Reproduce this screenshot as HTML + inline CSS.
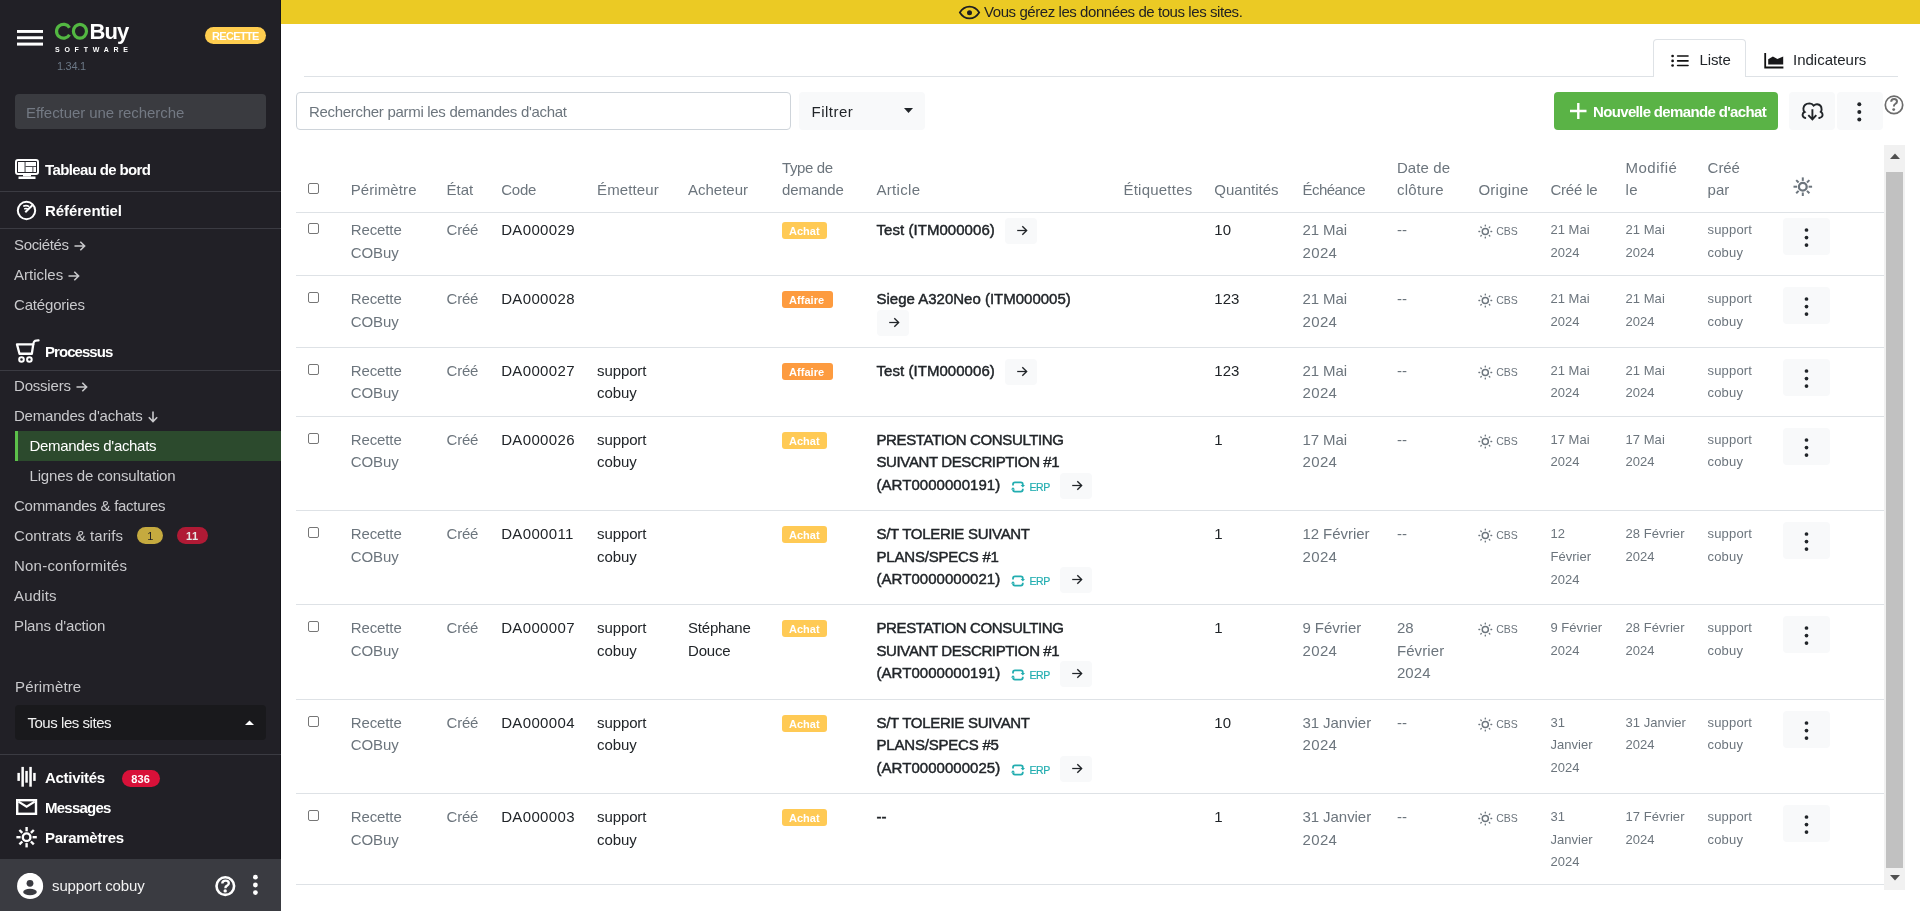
<!DOCTYPE html>
<html><head><meta charset="utf-8"><title>Demandes d'achats</title><style>
html,body{margin:0;padding:0;}
body{width:1920px;height:911px;overflow:hidden;position:relative;background:#fff;font-family:"Liberation Sans",sans-serif;}
#root{position:absolute;left:0;top:0;width:1920px;height:911px;will-change:transform;}
.t{position:absolute;white-space:nowrap;}
.b{position:absolute;}
.abtn{width:32px;height:26px;background:#f8f9fa;border-radius:4px;display:flex;align-items:center;justify-content:center;}
.kbtn{width:47px;height:37px;background:#f8f9fa;border-radius:4px;display:flex;align-items:center;justify-content:center;}
</style></head><body>
<div id="root">
<div class="b" style="left:0px;top:0px;width:281px;height:911px;background:#212026;"></div>
<div class="b" style="left:280px;top:0px;width:1px;height:911px;background:#15151a;"></div>
<svg class="b" style="left:17px;top:30px" width="26" height="16"><rect x="0" y="0" width="26" height="2.9" fill="#fff"/><rect x="0" y="6.3" width="26" height="2.9" fill="#fff"/><rect x="0" y="12.6" width="26" height="3" fill="#fff"/></svg>
<svg class="b" style="left:54px;top:22px" width="36" height="19" viewBox="0 0 36 19"><path d="M15.5 5.75 A6.95 6.95 0 1 0 15.5 12.75" stroke="#53b842" stroke-width="3.2" fill="none"/><ellipse cx="25.95" cy="9.3" rx="6.55" ry="6.85" stroke="#53b842" stroke-width="3.2" fill="none"/></svg>
<div class="t" style="left:89.50px;top:18.58px;font-size:22px;line-height:26px;color:#fff;font-weight:700;letter-spacing:-0.9px;">Buy</div>
<div class="t" style="left:55.00px;top:45.27px;font-size:7px;line-height:9px;color:#fff;font-weight:700;letter-spacing:4.75px;">SOFTWARE</div>
<div class="t" style="left:57.00px;top:59.39px;font-size:11px;line-height:14px;color:#6b7785;letter-spacing:-0.3px;">1.34.1</div>
<div class="b" style="left:205px;top:27px;width:61px;height:17px;background:#ffcd4f;border-radius:9px;"></div>
<div class="t" style="left:212.00px;top:29.39px;font-size:11px;line-height:14px;color:#fff;font-weight:700;letter-spacing:-0.65px;">RECETTE</div>
<div class="b" style="left:15px;top:94px;width:251px;height:35px;background:#3a3b40;border-radius:4px;"></div>
<div class="t" style="left:26.00px;top:101.75px;font-size:15px;line-height:22.5px;color:#737983;letter-spacing:-0.07px;">Effectuer une recherche</div>
<svg class="b" style="left:14px;top:158px" width="26" height="22" viewBox="0 0 26 22"><rect x="2" y="2" width="22" height="14" rx="2" fill="none" stroke="#fff" stroke-width="2"/><rect x="4" y="4" width="18" height="10" fill="#fff"/><rect x="10.6" y="4" width="0.9" height="10" fill="#212026"/><rect x="11.5" y="8.2" width="10.5" height="0.8" fill="#212026"/><rect x="18.5" y="9" width="0.8" height="5" fill="#212026"/><rect x="9" y="16" width="8" height="2.5" fill="#fff"/><rect x="4.5" y="18.5" width="17" height="2.5" fill="#fff"/></svg>
<div class="t" style="left:45.00px;top:158.75px;font-size:15px;line-height:22.5px;color:#fff;font-weight:700;letter-spacing:-0.63px;">Tableau de bord</div>
<div class="b" style="left:0px;top:190.5px;width:281px;height:1px;background:#3b3b42;"></div>
<svg class="b" style="left:15px;top:199px" width="24" height="24" viewBox="0 0 24 24"><circle cx="11.5" cy="11.5" r="8.7" fill="none" stroke="#fff" stroke-width="2"/><path d="M10.3 13.3 L17.6 6" stroke="#fff" stroke-width="2" fill="none"/><path d="M8.2 7.2 Q11.5 5.8 14.2 7.6" stroke="#fff" stroke-width="1.6" fill="none"/><path d="M9.2 10 Q11.2 9 12.8 10.2" stroke="#fff" stroke-width="1.5" fill="none"/></svg>
<div class="t" style="left:45.00px;top:199.75px;font-size:15px;line-height:22.5px;color:#fff;font-weight:700;letter-spacing:-0.05px;">Référentiel</div>
<div class="b" style="left:0px;top:228px;width:281px;height:1px;background:#3b3b42;"></div>
<div class="t" style="left:14.00px;top:233.75px;font-size:15px;line-height:22.5px;color:#c9c9cc;letter-spacing:-0.35px;">Sociétés<svg style="display:inline-block;vertical-align:-1px;margin-left:5px" width="12" height="10" viewBox="0 0 12 10"><path d="M0.5 5 H10.5 M6.3 0.8 L10.6 5 L6.3 9.2" stroke="#c9c9cc" stroke-width="1.6" fill="none"/></svg></div>
<div class="t" style="left:14.00px;top:263.75px;font-size:15px;line-height:22.5px;color:#c9c9cc;letter-spacing:0.0px;">Articles<svg style="display:inline-block;vertical-align:-1px;margin-left:5px" width="12" height="10" viewBox="0 0 12 10"><path d="M0.5 5 H10.5 M6.3 0.8 L10.6 5 L6.3 9.2" stroke="#c9c9cc" stroke-width="1.6" fill="none"/></svg></div>
<div class="t" style="left:14.00px;top:293.75px;font-size:15px;line-height:22.5px;color:#c9c9cc;letter-spacing:-0.18px;">Catégories</div>
<svg class="b" style="left:14px;top:338px" width="26" height="26" viewBox="0 0 26 26"><path d="M3 6.35 H19.25 L17.85 15.75 H5.5 Z" stroke="#fff" stroke-width="2.3" fill="none" stroke-linejoin="round"/><path d="M19.25 6.4 L19.8 4.2 Q20.6 2.3 24.6 2.4" stroke="#fff" stroke-width="2.1" fill="none" stroke-linecap="round"/><circle cx="7.5" cy="21.5" r="2.3" fill="none" stroke="#fff" stroke-width="2"/><circle cx="15.4" cy="21.5" r="2.3" fill="none" stroke="#fff" stroke-width="2"/></svg>
<div class="t" style="left:45.00px;top:340.75px;font-size:15px;line-height:22.5px;color:#fff;font-weight:700;letter-spacing:-0.95px;">Processus</div>
<div class="b" style="left:0px;top:369.5px;width:281px;height:1px;background:#3b3b42;"></div>
<div class="t" style="left:14.00px;top:374.75px;font-size:15px;line-height:22.5px;color:#c9c9cc;letter-spacing:-0.2px;">Dossiers<svg style="display:inline-block;vertical-align:-1px;margin-left:5px" width="12" height="10" viewBox="0 0 12 10"><path d="M0.5 5 H10.5 M6.3 0.8 L10.6 5 L6.3 9.2" stroke="#c9c9cc" stroke-width="1.6" fill="none"/></svg></div>
<div class="t" style="left:14.00px;top:404.75px;font-size:15px;line-height:22.5px;color:#c9c9cc;letter-spacing:-0.21px;">Demandes d'achats<svg style="display:inline-block;vertical-align:-2px;margin-left:5px" width="10" height="12" viewBox="0 0 10 12"><path d="M5 0.5 V10.5 M0.8 6.3 L5 10.6 L9.2 6.3" stroke="#c9c9cc" stroke-width="1.6" fill="none"/></svg></div>
<div class="b" style="left:15px;top:431px;width:266px;height:30px;background:#2c4a2d;"></div>
<div class="b" style="left:15px;top:431px;width:3px;height:30px;background:#5cc04a;"></div>
<div class="t" style="left:29.50px;top:434.75px;font-size:15px;line-height:22.5px;color:#fff;letter-spacing:-0.32px;">Demandes d&#x27;achats</div>
<div class="t" style="left:29.50px;top:464.75px;font-size:15px;line-height:22.5px;color:#c9c9cc;letter-spacing:-0.15px;">Lignes de consultation</div>
<div class="t" style="left:14.00px;top:494.75px;font-size:15px;line-height:22.5px;color:#c9c9cc;letter-spacing:-0.27px;">Commandes &amp; factures</div>
<div class="t" style="left:14.00px;top:524.75px;font-size:15px;line-height:22.5px;color:#c9c9cc;letter-spacing:0.09px;">Contrats &amp; tarifs</div>
<div class="b" style="left:137px;top:527px;width:26px;height:17px;background:#c5aa3f;border-radius:9px;"></div>
<div class="t" style="left:147.20px;top:529.39px;font-size:11px;line-height:14px;color:#222;">1</div>
<div class="b" style="left:177px;top:527px;width:31px;height:17px;background:#b01a35;border-radius:9px;"></div>
<div class="t" style="left:186.00px;top:529.39px;font-size:11px;line-height:14px;color:#e6e6e6;font-weight:700;letter-spacing:0.5px;">11</div>
<div class="t" style="left:14.00px;top:554.75px;font-size:15px;line-height:22.5px;color:#c9c9cc;letter-spacing:0.22px;">Non-conformités</div>
<div class="t" style="left:14.00px;top:584.75px;font-size:15px;line-height:22.5px;color:#c9c9cc;letter-spacing:0.18px;">Audits</div>
<div class="t" style="left:14.00px;top:614.75px;font-size:15px;line-height:22.5px;color:#c9c9cc;letter-spacing:-0.12px;">Plans d&#x27;action</div>
<div class="t" style="left:15.00px;top:675.75px;font-size:15px;line-height:22.5px;color:#c9c9cc;letter-spacing:0.15px;">Périmètre</div>
<div class="b" style="left:15px;top:705px;width:251px;height:35px;background:#19191c;border-radius:4px;"></div>
<div class="t" style="left:27.40px;top:711.75px;font-size:15px;line-height:22.5px;color:#f2f2f2;letter-spacing:-0.45px;">Tous les sites</div>
<svg class="b" style="left:245px;top:720px" width="9" height="5"><path d="M0 5 L4.5 0.5 L9 5 Z" fill="#fff"/></svg>
<div class="b" style="left:0px;top:754px;width:281px;height:1px;background:#3b3b42;"></div>
<svg class="b" style="left:17px;top:766px" width="20" height="22" viewBox="0 0 20 22"><rect x="0.4" y="6.9" width="2.5" height="8" fill="#fff"/><rect x="4.4" y="0.9" width="2.5" height="19.8" fill="#fff"/><rect x="8.3" y="4.9" width="2.5" height="11.8" fill="#fff"/><rect x="12.3" y="0.9" width="2.5" height="19.8" fill="#fff"/><rect x="16.2" y="6.9" width="2.5" height="8" fill="#fff"/></svg>
<div class="t" style="left:45.00px;top:766.75px;font-size:15px;line-height:22.5px;color:#fff;font-weight:700;letter-spacing:-0.3px;">Activités</div>
<div class="b" style="left:122px;top:770px;width:38px;height:17px;background:#d81139;border-radius:9px;"></div>
<div class="t" style="left:131.20px;top:772.39px;font-size:11px;line-height:14px;color:#fff;font-weight:700;letter-spacing:0.2px;">836</div>
<svg class="b" style="left:16px;top:799px" width="22" height="16" viewBox="0 0 22 16"><rect x="1.2" y="1.2" width="18.8" height="13.6" fill="none" stroke="#fff" stroke-width="2.4"/><path d="M2.5 2.6 L10.6 7.6 L18.7 2.6" stroke="#fff" stroke-width="2.2" fill="none"/></svg>
<div class="t" style="left:45.00px;top:796.75px;font-size:15px;line-height:22.5px;color:#fff;font-weight:700;letter-spacing:-0.75px;">Messages</div>
<svg class="b" style="left:16px;top:827px" width="22" height="22" viewBox="0 0 22 22"><circle cx="10.6" cy="10.2" r="3.8" fill="none" stroke="#fff" stroke-width="2.4"/><g stroke="#fff" stroke-width="2.4"><path d="M10.6 0 V4.3"/><path d="M10.6 16.1 V20.4"/><path d="M0.4 10.2 H4.6"/><path d="M16.6 10.2 H20.8"/><path d="M3.4 3 L6.3 5.9"/><path d="M14.9 14.5 L17.8 17.4"/><path d="M3.4 17.4 L6.3 14.5"/><path d="M14.9 5.9 L17.8 3"/></g></svg>
<div class="t" style="left:45.00px;top:826.75px;font-size:15px;line-height:22.5px;color:#fff;font-weight:700;letter-spacing:-0.3px;">Paramètres</div>
<div class="b" style="left:0px;top:859px;width:281px;height:52px;background:#3a3b41;"></div>
<svg class="b" style="left:17px;top:873px" width="27" height="27" viewBox="0 0 27 27"><circle cx="13.1" cy="12.9" r="13.05" fill="#fff"/><circle cx="13" cy="10.3" r="3.4" fill="#3a3b41"/><ellipse cx="13" cy="19" rx="6.8" ry="3.2" fill="#3a3b41"/></svg>
<div class="t" style="left:52.00px;top:874.75px;font-size:15px;line-height:22.5px;color:#f2f2f2;letter-spacing:-0.12px;">support cobuy</div>
<svg class="b" style="left:214px;top:875px" width="23" height="23" viewBox="0 0 23 23"><circle cx="11.3" cy="11.1" r="8.8" fill="none" stroke="#fff" stroke-width="2.6"/><path d="M8.3 8.6 Q8.3 5.6 11.6 5.6 Q14.8 5.6 14.8 8.2 Q14.8 9.9 12.8 10.9 Q11.4 11.6 11.4 13.2" stroke="#fff" stroke-width="2.4" fill="none"/><circle cx="11.2" cy="15.9" r="1.7" fill="#fff"/></svg>
<svg class="b" style="left:252px;top:874px" width="7" height="22" viewBox="0 0 7 22"><circle cx="3.4" cy="3.2" r="2.4" fill="#fff"/><circle cx="3.4" cy="11" r="2.4" fill="#fff"/><circle cx="3.4" cy="18.6" r="2.4" fill="#fff"/></svg>
<div class="b" style="left:281px;top:0px;width:1639px;height:24px;background:#ebca24;"></div>
<svg class="b" style="left:958px;top:5px" width="23" height="15" viewBox="0 0 23 15"><path d="M1.8 7.5 C4.5 3.2 7.8 1.6 11.5 1.6 C15.2 1.6 18.5 3.2 21.2 7.5 C18.5 11.8 15.2 13.4 11.5 13.4 C7.8 13.4 4.5 11.8 1.8 7.5 Z" fill="none" stroke="#1e1e22" stroke-width="1.7"/><circle cx="11.5" cy="7.8" r="2.5" fill="#1e1e22"/></svg>
<div class="t" style="left:984.00px;top:2.00px;font-size:15px;line-height:20px;color:#222;letter-spacing:-0.43px;">Vous gérez les données de tous les sites.</div>
<div class="b" style="left:304px;top:76px;width:1594px;height:1px;background:#dee2e6;"></div>
<div class="b" style="left:1653px;top:39px;width:93px;height:38px;background:#fff;border:1px solid #dee2e6;border-bottom:none;border-radius:4px 4px 0 0;box-sizing:border-box;"></div>
<svg class="b" style="left:1670px;top:53px" width="20" height="15" viewBox="0 0 20 15"><circle cx="2.6" cy="3" r="1.35" fill="#111"/><circle cx="2.6" cy="7.9" r="1.35" fill="#111"/><circle cx="2.6" cy="12.5" r="1.35" fill="#111"/><rect x="6.8" y="2.2" width="12" height="1.6" rx="0.8" fill="#111"/><rect x="6.8" y="7.1" width="12" height="1.6" rx="0.8" fill="#111"/><rect x="6.8" y="11.7" width="12" height="1.6" rx="0.8" fill="#111"/></svg>
<div class="t" style="left:1699.50px;top:48.75px;font-size:15px;line-height:22.5px;color:#212529;letter-spacing:-0.1px;">Liste</div>
<svg class="b" style="left:1763px;top:52px" width="22" height="18" viewBox="0 0 22 18"><path d="M2.2 1 V15.5 H20.4" stroke="#111" stroke-width="1.8" fill="none"/><path d="M5.2 12.6 V7.2 L9.9 4.4 L14.4 7.1 L20.2 4.4 V12.6 Z" fill="#18181a"/></svg>
<div class="t" style="left:1793.00px;top:48.75px;font-size:15px;line-height:22.5px;color:#212529;letter-spacing:0.0px;">Indicateurs</div>
<div class="b" style="left:296px;top:92px;width:495px;height:38px;border:1px solid #ced4da;border-radius:4px;box-sizing:border-box;background:#fff;"></div>
<div class="t" style="left:309.00px;top:100.75px;font-size:15px;line-height:22.5px;color:#6c757d;letter-spacing:-0.3px;">Rechercher parmi les demandes d&#x27;achat</div>
<div class="b" style="left:799px;top:92px;width:126px;height:38px;background:#f8f9fa;border-radius:4px;"></div>
<div class="t" style="left:811.50px;top:100.75px;font-size:15px;line-height:22.5px;color:#212529;letter-spacing:0.48px;">Filtrer</div>
<svg class="b" style="left:904px;top:108px" width="9" height="5"><path d="M0 0 L9 0 L4.5 5 Z" fill="#212529"/></svg>
<div class="b" style="left:1554px;top:92px;width:224px;height:38px;background:#5ab346;border-radius:4px;"></div>
<svg class="b" style="left:1569px;top:102px" width="19" height="18" viewBox="0 0 19 18"><path d="M9.3 1 V17 M1 9 H17.5" stroke="#fff" stroke-width="2.4"/></svg>
<div class="t" style="left:1593.00px;top:100.75px;font-size:15px;line-height:22.5px;color:#fff;font-weight:700;letter-spacing:-0.65px;">Nouvelle demande d&#x27;achat</div>
<div class="b" style="left:1789px;top:92px;width:46px;height:38px;background:#f8f9fa;border-radius:4px;"></div>
<div class="b" style="left:1837px;top:92px;width:46px;height:38px;background:#f8f9fa;border-radius:4px;"></div>
<svg class="b" style="left:1800px;top:100px" width="26" height="22" viewBox="0 0 26 22"><path d="M5.3 18 Q2.4 17.3 2.6 14.6 Q2.8 12.6 4.6 12 Q3.2 10.8 3.4 8.4 Q4 3.6 9.5 3.4 Q12.2 3.4 13.7 5.6 Q15.2 4.2 17.2 4.3 Q21.5 4.8 21.6 9.4 Q21.6 10.8 20.8 11.8 Q22.8 12.8 22.6 15 Q22.3 17.4 19.2 18" stroke="#212529" stroke-width="1.9" fill="none" stroke-linecap="round"/><path d="M12.4 9.3 V19.4 M8.3 15.1 L12.4 19.4 L16.3 15.1" stroke="#212529" stroke-width="1.9" fill="none"/></svg>
<svg class="b" style="left:1856px;top:101px" width="7" height="22" viewBox="0 0 7 22"><circle cx="3.3" cy="3.2" r="2" fill="#212529"/><circle cx="3.3" cy="11" r="2" fill="#212529"/><circle cx="3.3" cy="18.6" r="2" fill="#212529"/></svg>
<svg class="b" style="left:1883px;top:94px" width="22" height="22" viewBox="0 0 22 22"><circle cx="11" cy="10.9" r="8.7" fill="none" stroke="#6c6c6c" stroke-width="1.7"/><path d="M8.2 7.8 Q8.2 5 11.1 5 Q14 5 14 7.5 Q14 9 12.2 10 Q10.9 10.7 10.9 12.5" stroke="#6c6c6c" stroke-width="2" fill="none"/><circle cx="10.7" cy="15.6" r="1.45" fill="#6c6c6c"/></svg>
<div class="b" style="left:308px;top:183px;width:11px;height:11px;border:1px solid #767676;border-radius:2px;box-sizing:border-box;"></div>
<div class="t" style="left:350.70px;top:178.75px;font-size:15px;line-height:22.5px;color:#6c757d;letter-spacing:0.1px;">Périmètre</div>
<div class="t" style="left:446.50px;top:178.75px;font-size:15px;line-height:22.5px;color:#6c757d;letter-spacing:0.03px;">État</div>
<div class="t" style="left:501.20px;top:178.75px;font-size:15px;line-height:22.5px;color:#6c757d;letter-spacing:-0.2px;">Code</div>
<div class="t" style="left:597.00px;top:178.75px;font-size:15px;line-height:22.5px;color:#6c757d;letter-spacing:0.13px;">Émetteur</div>
<div class="t" style="left:688.00px;top:178.75px;font-size:15px;line-height:22.5px;color:#6c757d;letter-spacing:0.0px;">Acheteur</div>
<div class="t" style="left:782.00px;top:156.75px;font-size:15px;line-height:22.5px;color:#6c757d;letter-spacing:-0.4px;">Type de</div>
<div class="t" style="left:782.00px;top:178.75px;font-size:15px;line-height:22.5px;color:#6c757d;letter-spacing:-0.1px;">demande</div>
<div class="t" style="left:876.40px;top:178.75px;font-size:15px;line-height:22.5px;color:#6c757d;letter-spacing:0.33px;">Article</div>
<div class="t" style="left:1123.50px;top:178.75px;font-size:15px;line-height:22.5px;color:#6c757d;letter-spacing:0.22px;">Étiquettes</div>
<div class="t" style="left:1214.30px;top:178.75px;font-size:15px;line-height:22.5px;color:#6c757d;letter-spacing:0.0px;">Quantités</div>
<div class="t" style="left:1302.40px;top:178.75px;font-size:15px;line-height:22.5px;color:#6c757d;letter-spacing:-0.5px;">Échéance</div>
<div class="t" style="left:1396.90px;top:156.75px;font-size:15px;line-height:22.5px;color:#6c757d;letter-spacing:0.1px;">Date de</div>
<div class="t" style="left:1396.90px;top:178.75px;font-size:15px;line-height:22.5px;color:#6c757d;letter-spacing:0.3px;">clôture</div>
<div class="t" style="left:1478.40px;top:178.75px;font-size:15px;line-height:22.5px;color:#6c757d;letter-spacing:0.28px;">Origine</div>
<div class="t" style="left:1550.40px;top:178.75px;font-size:15px;line-height:22.5px;color:#6c757d;letter-spacing:-0.18px;">Créé le</div>
<div class="t" style="left:1625.50px;top:156.75px;font-size:15px;line-height:22.5px;color:#6c757d;letter-spacing:0.5px;">Modifié</div>
<div class="t" style="left:1625.50px;top:178.75px;font-size:15px;line-height:22.5px;color:#6c757d;letter-spacing:0.5px;">le</div>
<div class="t" style="left:1707.60px;top:156.75px;font-size:15px;line-height:22.5px;color:#6c757d;letter-spacing:-0.05px;">Créé</div>
<div class="t" style="left:1707.60px;top:178.75px;font-size:15px;line-height:22.5px;color:#6c757d;letter-spacing:-0.05px;">par</div>
<svg class="b" style="left:1792px;top:176px" width="22" height="22" viewBox="0 0 22 22"><circle cx="10.8" cy="10.7" r="3.9" fill="none" stroke="#6c757d" stroke-width="2.3"/><g stroke="#6c757d" stroke-width="2"><path d="M10.8 1.4 V4.9"/><path d="M10.8 16.5 V20"/><path d="M1.5 10.7 H5"/><path d="M16.6 10.7 H20.1"/><path d="M4.2 4.1 L6.6 6.5"/><path d="M15 14.9 L17.4 17.3"/><path d="M4.2 17.3 L6.6 14.9"/><path d="M15 6.5 L17.4 4.1"/></g></svg>
<div class="b" style="left:296px;top:212px;width:1588px;height:1px;background:#dee2e6;"></div>
<div class="b" style="left:296px;top:275px;width:1588px;height:1px;background:#dee2e6;"></div>
<div class="b" style="left:296px;top:347px;width:1588px;height:1px;background:#dee2e6;"></div>
<div class="b" style="left:296px;top:416px;width:1588px;height:1px;background:#dee2e6;"></div>
<div class="b" style="left:296px;top:510px;width:1588px;height:1px;background:#dee2e6;"></div>
<div class="b" style="left:296px;top:604px;width:1588px;height:1px;background:#dee2e6;"></div>
<div class="b" style="left:296px;top:699px;width:1588px;height:1px;background:#dee2e6;"></div>
<div class="b" style="left:296px;top:793px;width:1588px;height:1px;background:#dee2e6;"></div>
<div class="b" style="left:296px;top:884px;width:1588px;height:1px;background:#dee2e6;"></div>
<div class="b" style="left:308px;top:223px;width:11px;height:11px;border:1px solid #767676;border-radius:2px;box-sizing:border-box;"></div>
<div class="t" style="left:350.70px;top:218.75px;font-size:15px;line-height:22.5px;color:#6c757d;letter-spacing:-0.1px;">Recette</div>
<div class="t" style="left:350.70px;top:241.75px;font-size:15px;line-height:22.5px;color:#6c757d;letter-spacing:-0.1px;">COBuy</div>
<div class="t" style="left:446.50px;top:218.75px;font-size:15px;line-height:22.5px;color:#6c757d;letter-spacing:-0.2px;">Créé</div>
<div class="t" style="left:501.20px;top:218.75px;font-size:15px;line-height:22.5px;color:#212529;letter-spacing:0.35px;">DA000029</div>
<div class="b" style="left:782px;top:222px;width:45px;height:17px;background:#ffca55;border-radius:3px;"></div>
<div class="t" style="left:789.00px;top:224.39px;font-size:11px;line-height:14px;color:#fff;font-weight:700;letter-spacing:0.0px;">Achat</div>
<div class="t" style="left:876.50px;top:218.75px;font-size:15px;line-height:22.5px;color:#212529;letter-spacing:0.05px;-webkit-text-stroke:0.45px #212529;">Test (ITM000006)</div>
<div class="b abtn" style="left:1005px;top:218.0px"><svg width="12" height="11" viewBox="0 0 12 11" style="margin-left:1px;margin-top:-1px"><path d="M1.2 5.5 H10.4" stroke="#212529" stroke-width="1.25" fill="none"/><path d="M6.3 1.2 L10.6 5.5 L6.3 9.8" stroke="#212529" stroke-width="1.4" fill="none"/></svg></div>
<div class="t" style="left:1214.30px;top:218.75px;font-size:15px;line-height:22.5px;color:#212529;">10</div>
<div class="t" style="left:1302.40px;top:218.75px;font-size:15px;line-height:22.5px;color:#6c757d;letter-spacing:-0.05px;">21 Mai</div>
<div class="t" style="left:1302.40px;top:241.75px;font-size:15px;line-height:22.5px;color:#6c757d;letter-spacing:0.4px;">2024</div>
<div class="t" style="left:1396.90px;top:218.75px;font-size:15px;line-height:22.5px;color:#6c757d;letter-spacing:0.1px;">--</div>
<svg class="b" style="left:1478px;top:223.9px" width="15" height="15" viewBox="0 0 15 15"><circle cx="7.3" cy="7.5" r="3.05" fill="none" stroke="#6c757d" stroke-width="1.45"/><g stroke="#6c757d" stroke-width="1.3" stroke-linecap="round"><path d="M7.3 1.1 V1.9"/><path d="M7.3 13.1 V13.9"/><path d="M0.9 7.5 H1.7"/><path d="M12.9 7.5 H13.7"/><path d="M2.8 3 L3.3 3.5"/><path d="M11.3 11.5 L11.8 12"/><path d="M2.8 12 L3.3 11.5"/><path d="M11.3 3.5 L11.8 3"/></g></svg>
<div class="t" style="left:1496.20px;top:223.56px;font-size:10.5px;line-height:14px;color:#6c757d;letter-spacing:0.0px;">CBS</div>
<div class="t" style="left:1550.40px;top:219.45px;font-size:13px;line-height:22.5px;color:#6c757d;letter-spacing:0.05px;">21 Mai</div>
<div class="t" style="left:1550.40px;top:242.45px;font-size:13px;line-height:22.5px;color:#6c757d;letter-spacing:0.05px;">2024</div>
<div class="t" style="left:1625.50px;top:219.45px;font-size:13px;line-height:22.5px;color:#6c757d;letter-spacing:0.05px;">21 Mai</div>
<div class="t" style="left:1625.50px;top:242.45px;font-size:13px;line-height:22.5px;color:#6c757d;letter-spacing:0.05px;">2024</div>
<div class="t" style="left:1707.60px;top:219.45px;font-size:13px;line-height:22.5px;color:#6c757d;letter-spacing:0.15px;">support</div>
<div class="t" style="left:1707.60px;top:242.45px;font-size:13px;line-height:22.5px;color:#6c757d;letter-spacing:0.15px;">cobuy</div>
<div class="b kbtn" style="left:1783px;top:218px"><svg style="margin-top:2px" width="5" height="19" viewBox="0 0 5 19"><circle cx="2.5" cy="2" r="1.85" fill="#212529"/><circle cx="2.5" cy="9.6" r="1.85" fill="#212529"/><circle cx="2.5" cy="17.1" r="1.85" fill="#212529"/></svg></div>
<div class="b" style="left:308px;top:292px;width:11px;height:11px;border:1px solid #767676;border-radius:2px;box-sizing:border-box;"></div>
<div class="t" style="left:350.70px;top:287.75px;font-size:15px;line-height:22.5px;color:#6c757d;letter-spacing:-0.1px;">Recette</div>
<div class="t" style="left:350.70px;top:310.75px;font-size:15px;line-height:22.5px;color:#6c757d;letter-spacing:-0.1px;">COBuy</div>
<div class="t" style="left:446.50px;top:287.75px;font-size:15px;line-height:22.5px;color:#6c757d;letter-spacing:-0.2px;">Créé</div>
<div class="t" style="left:501.20px;top:287.75px;font-size:15px;line-height:22.5px;color:#212529;letter-spacing:0.35px;">DA000028</div>
<div class="b" style="left:782px;top:291px;width:51px;height:17px;background:#fd9b3f;border-radius:3px;"></div>
<div class="t" style="left:789.00px;top:293.39px;font-size:11px;line-height:14px;color:#fff;font-weight:700;letter-spacing:0.05px;">Affaire</div>
<div class="t" style="left:876.50px;top:287.75px;font-size:15px;line-height:22.5px;color:#212529;letter-spacing:0.0px;-webkit-text-stroke:0.45px #212529;">Siege A320Neo (ITM000005)</div>
<div class="b abtn" style="left:877px;top:310.0px"><svg width="12" height="11" viewBox="0 0 12 11" style="margin-left:1px;margin-top:-1px"><path d="M1.2 5.5 H10.4" stroke="#212529" stroke-width="1.25" fill="none"/><path d="M6.3 1.2 L10.6 5.5 L6.3 9.8" stroke="#212529" stroke-width="1.4" fill="none"/></svg></div>
<div class="t" style="left:1214.30px;top:287.75px;font-size:15px;line-height:22.5px;color:#212529;">123</div>
<div class="t" style="left:1302.40px;top:287.75px;font-size:15px;line-height:22.5px;color:#6c757d;letter-spacing:-0.05px;">21 Mai</div>
<div class="t" style="left:1302.40px;top:310.75px;font-size:15px;line-height:22.5px;color:#6c757d;letter-spacing:0.4px;">2024</div>
<div class="t" style="left:1396.90px;top:287.75px;font-size:15px;line-height:22.5px;color:#6c757d;letter-spacing:0.1px;">--</div>
<svg class="b" style="left:1478px;top:292.9px" width="15" height="15" viewBox="0 0 15 15"><circle cx="7.3" cy="7.5" r="3.05" fill="none" stroke="#6c757d" stroke-width="1.45"/><g stroke="#6c757d" stroke-width="1.3" stroke-linecap="round"><path d="M7.3 1.1 V1.9"/><path d="M7.3 13.1 V13.9"/><path d="M0.9 7.5 H1.7"/><path d="M12.9 7.5 H13.7"/><path d="M2.8 3 L3.3 3.5"/><path d="M11.3 11.5 L11.8 12"/><path d="M2.8 12 L3.3 11.5"/><path d="M11.3 3.5 L11.8 3"/></g></svg>
<div class="t" style="left:1496.20px;top:292.56px;font-size:10.5px;line-height:14px;color:#6c757d;letter-spacing:0.0px;">CBS</div>
<div class="t" style="left:1550.40px;top:288.45px;font-size:13px;line-height:22.5px;color:#6c757d;letter-spacing:0.05px;">21 Mai</div>
<div class="t" style="left:1550.40px;top:311.45px;font-size:13px;line-height:22.5px;color:#6c757d;letter-spacing:0.05px;">2024</div>
<div class="t" style="left:1625.50px;top:288.45px;font-size:13px;line-height:22.5px;color:#6c757d;letter-spacing:0.05px;">21 Mai</div>
<div class="t" style="left:1625.50px;top:311.45px;font-size:13px;line-height:22.5px;color:#6c757d;letter-spacing:0.05px;">2024</div>
<div class="t" style="left:1707.60px;top:288.45px;font-size:13px;line-height:22.5px;color:#6c757d;letter-spacing:0.15px;">support</div>
<div class="t" style="left:1707.60px;top:311.45px;font-size:13px;line-height:22.5px;color:#6c757d;letter-spacing:0.15px;">cobuy</div>
<div class="b kbtn" style="left:1783px;top:287px"><svg style="margin-top:2px" width="5" height="19" viewBox="0 0 5 19"><circle cx="2.5" cy="2" r="1.85" fill="#212529"/><circle cx="2.5" cy="9.6" r="1.85" fill="#212529"/><circle cx="2.5" cy="17.1" r="1.85" fill="#212529"/></svg></div>
<div class="b" style="left:308px;top:364px;width:11px;height:11px;border:1px solid #767676;border-radius:2px;box-sizing:border-box;"></div>
<div class="t" style="left:350.70px;top:359.75px;font-size:15px;line-height:22.5px;color:#6c757d;letter-spacing:-0.1px;">Recette</div>
<div class="t" style="left:350.70px;top:381.75px;font-size:15px;line-height:22.5px;color:#6c757d;letter-spacing:-0.1px;">COBuy</div>
<div class="t" style="left:446.50px;top:359.75px;font-size:15px;line-height:22.5px;color:#6c757d;letter-spacing:-0.2px;">Créé</div>
<div class="t" style="left:501.20px;top:359.75px;font-size:15px;line-height:22.5px;color:#212529;letter-spacing:0.35px;">DA000027</div>
<div class="t" style="left:597.00px;top:359.75px;font-size:15px;line-height:22.5px;color:#212529;letter-spacing:-0.1px;">support</div>
<div class="t" style="left:597.00px;top:381.75px;font-size:15px;line-height:22.5px;color:#212529;letter-spacing:-0.1px;">cobuy</div>
<div class="b" style="left:782px;top:363px;width:51px;height:17px;background:#fd9b3f;border-radius:3px;"></div>
<div class="t" style="left:789.00px;top:365.39px;font-size:11px;line-height:14px;color:#fff;font-weight:700;letter-spacing:0.05px;">Affaire</div>
<div class="t" style="left:876.50px;top:359.75px;font-size:15px;line-height:22.5px;color:#212529;letter-spacing:0.05px;-webkit-text-stroke:0.45px #212529;">Test (ITM000006)</div>
<div class="b abtn" style="left:1005px;top:359.0px"><svg width="12" height="11" viewBox="0 0 12 11" style="margin-left:1px;margin-top:-1px"><path d="M1.2 5.5 H10.4" stroke="#212529" stroke-width="1.25" fill="none"/><path d="M6.3 1.2 L10.6 5.5 L6.3 9.8" stroke="#212529" stroke-width="1.4" fill="none"/></svg></div>
<div class="t" style="left:1214.30px;top:359.75px;font-size:15px;line-height:22.5px;color:#212529;">123</div>
<div class="t" style="left:1302.40px;top:359.75px;font-size:15px;line-height:22.5px;color:#6c757d;letter-spacing:-0.05px;">21 Mai</div>
<div class="t" style="left:1302.40px;top:381.75px;font-size:15px;line-height:22.5px;color:#6c757d;letter-spacing:0.4px;">2024</div>
<div class="t" style="left:1396.90px;top:359.75px;font-size:15px;line-height:22.5px;color:#6c757d;letter-spacing:0.1px;">--</div>
<svg class="b" style="left:1478px;top:364.9px" width="15" height="15" viewBox="0 0 15 15"><circle cx="7.3" cy="7.5" r="3.05" fill="none" stroke="#6c757d" stroke-width="1.45"/><g stroke="#6c757d" stroke-width="1.3" stroke-linecap="round"><path d="M7.3 1.1 V1.9"/><path d="M7.3 13.1 V13.9"/><path d="M0.9 7.5 H1.7"/><path d="M12.9 7.5 H13.7"/><path d="M2.8 3 L3.3 3.5"/><path d="M11.3 11.5 L11.8 12"/><path d="M2.8 12 L3.3 11.5"/><path d="M11.3 3.5 L11.8 3"/></g></svg>
<div class="t" style="left:1496.20px;top:364.56px;font-size:10.5px;line-height:14px;color:#6c757d;letter-spacing:0.0px;">CBS</div>
<div class="t" style="left:1550.40px;top:360.45px;font-size:13px;line-height:22.5px;color:#6c757d;letter-spacing:0.05px;">21 Mai</div>
<div class="t" style="left:1550.40px;top:382.45px;font-size:13px;line-height:22.5px;color:#6c757d;letter-spacing:0.05px;">2024</div>
<div class="t" style="left:1625.50px;top:360.45px;font-size:13px;line-height:22.5px;color:#6c757d;letter-spacing:0.05px;">21 Mai</div>
<div class="t" style="left:1625.50px;top:382.45px;font-size:13px;line-height:22.5px;color:#6c757d;letter-spacing:0.05px;">2024</div>
<div class="t" style="left:1707.60px;top:360.45px;font-size:13px;line-height:22.5px;color:#6c757d;letter-spacing:0.15px;">support</div>
<div class="t" style="left:1707.60px;top:382.45px;font-size:13px;line-height:22.5px;color:#6c757d;letter-spacing:0.15px;">cobuy</div>
<div class="b kbtn" style="left:1783px;top:359px"><svg style="margin-top:2px" width="5" height="19" viewBox="0 0 5 19"><circle cx="2.5" cy="2" r="1.85" fill="#212529"/><circle cx="2.5" cy="9.6" r="1.85" fill="#212529"/><circle cx="2.5" cy="17.1" r="1.85" fill="#212529"/></svg></div>
<div class="b" style="left:308px;top:433px;width:11px;height:11px;border:1px solid #767676;border-radius:2px;box-sizing:border-box;"></div>
<div class="t" style="left:350.70px;top:428.75px;font-size:15px;line-height:22.5px;color:#6c757d;letter-spacing:-0.1px;">Recette</div>
<div class="t" style="left:350.70px;top:450.75px;font-size:15px;line-height:22.5px;color:#6c757d;letter-spacing:-0.1px;">COBuy</div>
<div class="t" style="left:446.50px;top:428.75px;font-size:15px;line-height:22.5px;color:#6c757d;letter-spacing:-0.2px;">Créé</div>
<div class="t" style="left:501.20px;top:428.75px;font-size:15px;line-height:22.5px;color:#212529;letter-spacing:0.35px;">DA000026</div>
<div class="t" style="left:597.00px;top:428.75px;font-size:15px;line-height:22.5px;color:#212529;letter-spacing:-0.1px;">support</div>
<div class="t" style="left:597.00px;top:450.75px;font-size:15px;line-height:22.5px;color:#212529;letter-spacing:-0.1px;">cobuy</div>
<div class="b" style="left:782px;top:432px;width:45px;height:17px;background:#ffca55;border-radius:3px;"></div>
<div class="t" style="left:789.00px;top:434.39px;font-size:11px;line-height:14px;color:#fff;font-weight:700;letter-spacing:0.0px;">Achat</div>
<div class="t" style="left:876.50px;top:428.75px;font-size:15px;line-height:22.5px;color:#212529;letter-spacing:-0.38px;-webkit-text-stroke:0.45px #212529;">PRESTATION CONSULTING</div>
<div class="t" style="left:876.50px;top:450.75px;font-size:15px;line-height:22.5px;color:#212529;letter-spacing:-0.38px;-webkit-text-stroke:0.45px #212529;">SUIVANT DESCRIPTION #1</div>
<div class="t" style="left:876.50px;top:473.75px;font-size:15px;line-height:22.5px;color:#212529;letter-spacing:0.04px;-webkit-text-stroke:0.45px #212529;">(ART0000000191)</div>
<svg class="b" style="left:1010px;top:481.0px" width="16" height="12" viewBox="0 0 16 12"><path d="M3 4.6 V3.4 Q3 1.4 5 1.4 H10.8 Q12.8 1.4 12.8 3.4 V4.2" stroke="#22adb0" stroke-width="1.75" fill="none"/><path d="M10.6 4 L15 4 L12.8 6.4 Z" fill="#22adb0"/><path d="M12.8 7.7 V8.6 Q12.8 10.6 10.8 10.6 H5 Q3 10.6 3 8.6 V8.4" stroke="#22adb0" stroke-width="1.75" fill="none"/><path d="M0.8 8.6 L5.2 8.6 L3 6.2 Z" fill="#22adb0"/></svg>
<div class="t" style="left:1029.50px;top:479.56px;font-size:10.5px;line-height:14px;color:#22adb0;letter-spacing:-0.45px;-webkit-text-stroke:0.2px #22adb0;">ERP</div>
<div class="b abtn" style="left:1060px;top:473.0px"><svg width="12" height="11" viewBox="0 0 12 11" style="margin-left:1px;margin-top:-1px"><path d="M1.2 5.5 H10.4" stroke="#212529" stroke-width="1.25" fill="none"/><path d="M6.3 1.2 L10.6 5.5 L6.3 9.8" stroke="#212529" stroke-width="1.4" fill="none"/></svg></div>
<div class="t" style="left:1214.30px;top:428.75px;font-size:15px;line-height:22.5px;color:#212529;">1</div>
<div class="t" style="left:1302.40px;top:428.75px;font-size:15px;line-height:22.5px;color:#6c757d;letter-spacing:-0.05px;">17 Mai</div>
<div class="t" style="left:1302.40px;top:450.75px;font-size:15px;line-height:22.5px;color:#6c757d;letter-spacing:0.4px;">2024</div>
<div class="t" style="left:1396.90px;top:428.75px;font-size:15px;line-height:22.5px;color:#6c757d;letter-spacing:0.1px;">--</div>
<svg class="b" style="left:1478px;top:433.9px" width="15" height="15" viewBox="0 0 15 15"><circle cx="7.3" cy="7.5" r="3.05" fill="none" stroke="#6c757d" stroke-width="1.45"/><g stroke="#6c757d" stroke-width="1.3" stroke-linecap="round"><path d="M7.3 1.1 V1.9"/><path d="M7.3 13.1 V13.9"/><path d="M0.9 7.5 H1.7"/><path d="M12.9 7.5 H13.7"/><path d="M2.8 3 L3.3 3.5"/><path d="M11.3 11.5 L11.8 12"/><path d="M2.8 12 L3.3 11.5"/><path d="M11.3 3.5 L11.8 3"/></g></svg>
<div class="t" style="left:1496.20px;top:433.56px;font-size:10.5px;line-height:14px;color:#6c757d;letter-spacing:0.0px;">CBS</div>
<div class="t" style="left:1550.40px;top:429.45px;font-size:13px;line-height:22.5px;color:#6c757d;letter-spacing:0.05px;">17 Mai</div>
<div class="t" style="left:1550.40px;top:451.45px;font-size:13px;line-height:22.5px;color:#6c757d;letter-spacing:0.05px;">2024</div>
<div class="t" style="left:1625.50px;top:429.45px;font-size:13px;line-height:22.5px;color:#6c757d;letter-spacing:0.05px;">17 Mai</div>
<div class="t" style="left:1625.50px;top:451.45px;font-size:13px;line-height:22.5px;color:#6c757d;letter-spacing:0.05px;">2024</div>
<div class="t" style="left:1707.60px;top:429.45px;font-size:13px;line-height:22.5px;color:#6c757d;letter-spacing:0.15px;">support</div>
<div class="t" style="left:1707.60px;top:451.45px;font-size:13px;line-height:22.5px;color:#6c757d;letter-spacing:0.15px;">cobuy</div>
<div class="b kbtn" style="left:1783px;top:428px"><svg style="margin-top:2px" width="5" height="19" viewBox="0 0 5 19"><circle cx="2.5" cy="2" r="1.85" fill="#212529"/><circle cx="2.5" cy="9.6" r="1.85" fill="#212529"/><circle cx="2.5" cy="17.1" r="1.85" fill="#212529"/></svg></div>
<div class="b" style="left:308px;top:527px;width:11px;height:11px;border:1px solid #767676;border-radius:2px;box-sizing:border-box;"></div>
<div class="t" style="left:350.70px;top:522.75px;font-size:15px;line-height:22.5px;color:#6c757d;letter-spacing:-0.1px;">Recette</div>
<div class="t" style="left:350.70px;top:545.75px;font-size:15px;line-height:22.5px;color:#6c757d;letter-spacing:-0.1px;">COBuy</div>
<div class="t" style="left:446.50px;top:522.75px;font-size:15px;line-height:22.5px;color:#6c757d;letter-spacing:-0.2px;">Créé</div>
<div class="t" style="left:501.20px;top:522.75px;font-size:15px;line-height:22.5px;color:#212529;letter-spacing:0.35px;">DA000011</div>
<div class="t" style="left:597.00px;top:522.75px;font-size:15px;line-height:22.5px;color:#212529;letter-spacing:-0.1px;">support</div>
<div class="t" style="left:597.00px;top:545.75px;font-size:15px;line-height:22.5px;color:#212529;letter-spacing:-0.1px;">cobuy</div>
<div class="b" style="left:782px;top:526px;width:45px;height:17px;background:#ffca55;border-radius:3px;"></div>
<div class="t" style="left:789.00px;top:528.39px;font-size:11px;line-height:14px;color:#fff;font-weight:700;letter-spacing:0.0px;">Achat</div>
<div class="t" style="left:876.50px;top:522.75px;font-size:15px;line-height:22.5px;color:#212529;letter-spacing:-0.3px;-webkit-text-stroke:0.45px #212529;">S/T TOLERIE SUIVANT</div>
<div class="t" style="left:876.50px;top:545.75px;font-size:15px;line-height:22.5px;color:#212529;letter-spacing:-0.2px;-webkit-text-stroke:0.45px #212529;">PLANS/SPECS #1</div>
<div class="t" style="left:876.50px;top:567.75px;font-size:15px;line-height:22.5px;color:#212529;letter-spacing:0.04px;-webkit-text-stroke:0.45px #212529;">(ART0000000021)</div>
<svg class="b" style="left:1010px;top:575.0px" width="16" height="12" viewBox="0 0 16 12"><path d="M3 4.6 V3.4 Q3 1.4 5 1.4 H10.8 Q12.8 1.4 12.8 3.4 V4.2" stroke="#22adb0" stroke-width="1.75" fill="none"/><path d="M10.6 4 L15 4 L12.8 6.4 Z" fill="#22adb0"/><path d="M12.8 7.7 V8.6 Q12.8 10.6 10.8 10.6 H5 Q3 10.6 3 8.6 V8.4" stroke="#22adb0" stroke-width="1.75" fill="none"/><path d="M0.8 8.6 L5.2 8.6 L3 6.2 Z" fill="#22adb0"/></svg>
<div class="t" style="left:1029.50px;top:573.56px;font-size:10.5px;line-height:14px;color:#22adb0;letter-spacing:-0.45px;-webkit-text-stroke:0.2px #22adb0;">ERP</div>
<div class="b abtn" style="left:1060px;top:567.0px"><svg width="12" height="11" viewBox="0 0 12 11" style="margin-left:1px;margin-top:-1px"><path d="M1.2 5.5 H10.4" stroke="#212529" stroke-width="1.25" fill="none"/><path d="M6.3 1.2 L10.6 5.5 L6.3 9.8" stroke="#212529" stroke-width="1.4" fill="none"/></svg></div>
<div class="t" style="left:1214.30px;top:522.75px;font-size:15px;line-height:22.5px;color:#212529;">1</div>
<div class="t" style="left:1302.40px;top:522.75px;font-size:15px;line-height:22.5px;color:#6c757d;letter-spacing:-0.05px;">12 Février</div>
<div class="t" style="left:1302.40px;top:545.75px;font-size:15px;line-height:22.5px;color:#6c757d;letter-spacing:0.4px;">2024</div>
<div class="t" style="left:1396.90px;top:522.75px;font-size:15px;line-height:22.5px;color:#6c757d;letter-spacing:0.1px;">--</div>
<svg class="b" style="left:1478px;top:527.9px" width="15" height="15" viewBox="0 0 15 15"><circle cx="7.3" cy="7.5" r="3.05" fill="none" stroke="#6c757d" stroke-width="1.45"/><g stroke="#6c757d" stroke-width="1.3" stroke-linecap="round"><path d="M7.3 1.1 V1.9"/><path d="M7.3 13.1 V13.9"/><path d="M0.9 7.5 H1.7"/><path d="M12.9 7.5 H13.7"/><path d="M2.8 3 L3.3 3.5"/><path d="M11.3 11.5 L11.8 12"/><path d="M2.8 12 L3.3 11.5"/><path d="M11.3 3.5 L11.8 3"/></g></svg>
<div class="t" style="left:1496.20px;top:527.56px;font-size:10.5px;line-height:14px;color:#6c757d;letter-spacing:0.0px;">CBS</div>
<div class="t" style="left:1550.40px;top:523.45px;font-size:13px;line-height:22.5px;color:#6c757d;letter-spacing:0.05px;">12</div>
<div class="t" style="left:1550.40px;top:546.45px;font-size:13px;line-height:22.5px;color:#6c757d;letter-spacing:0.05px;">Février</div>
<div class="t" style="left:1550.40px;top:569.45px;font-size:13px;line-height:22.5px;color:#6c757d;letter-spacing:0.05px;">2024</div>
<div class="t" style="left:1625.50px;top:523.45px;font-size:13px;line-height:22.5px;color:#6c757d;letter-spacing:0.05px;">28 Février</div>
<div class="t" style="left:1625.50px;top:546.45px;font-size:13px;line-height:22.5px;color:#6c757d;letter-spacing:0.05px;">2024</div>
<div class="t" style="left:1707.60px;top:523.45px;font-size:13px;line-height:22.5px;color:#6c757d;letter-spacing:0.15px;">support</div>
<div class="t" style="left:1707.60px;top:546.45px;font-size:13px;line-height:22.5px;color:#6c757d;letter-spacing:0.15px;">cobuy</div>
<div class="b kbtn" style="left:1783px;top:522px"><svg style="margin-top:2px" width="5" height="19" viewBox="0 0 5 19"><circle cx="2.5" cy="2" r="1.85" fill="#212529"/><circle cx="2.5" cy="9.6" r="1.85" fill="#212529"/><circle cx="2.5" cy="17.1" r="1.85" fill="#212529"/></svg></div>
<div class="b" style="left:308px;top:621px;width:11px;height:11px;border:1px solid #767676;border-radius:2px;box-sizing:border-box;"></div>
<div class="t" style="left:350.70px;top:616.75px;font-size:15px;line-height:22.5px;color:#6c757d;letter-spacing:-0.1px;">Recette</div>
<div class="t" style="left:350.70px;top:639.75px;font-size:15px;line-height:22.5px;color:#6c757d;letter-spacing:-0.1px;">COBuy</div>
<div class="t" style="left:446.50px;top:616.75px;font-size:15px;line-height:22.5px;color:#6c757d;letter-spacing:-0.2px;">Créé</div>
<div class="t" style="left:501.20px;top:616.75px;font-size:15px;line-height:22.5px;color:#212529;letter-spacing:0.35px;">DA000007</div>
<div class="t" style="left:597.00px;top:616.75px;font-size:15px;line-height:22.5px;color:#212529;letter-spacing:-0.1px;">support</div>
<div class="t" style="left:597.00px;top:639.75px;font-size:15px;line-height:22.5px;color:#212529;letter-spacing:-0.1px;">cobuy</div>
<div class="t" style="left:688.00px;top:616.75px;font-size:15px;line-height:22.5px;color:#212529;letter-spacing:-0.2px;">Stéphane</div>
<div class="t" style="left:688.00px;top:639.75px;font-size:15px;line-height:22.5px;color:#212529;letter-spacing:-0.2px;">Douce</div>
<div class="b" style="left:782px;top:620px;width:45px;height:17px;background:#ffca55;border-radius:3px;"></div>
<div class="t" style="left:789.00px;top:622.39px;font-size:11px;line-height:14px;color:#fff;font-weight:700;letter-spacing:0.0px;">Achat</div>
<div class="t" style="left:876.50px;top:616.75px;font-size:15px;line-height:22.5px;color:#212529;letter-spacing:-0.38px;-webkit-text-stroke:0.45px #212529;">PRESTATION CONSULTING</div>
<div class="t" style="left:876.50px;top:639.75px;font-size:15px;line-height:22.5px;color:#212529;letter-spacing:-0.38px;-webkit-text-stroke:0.45px #212529;">SUIVANT DESCRIPTION #1</div>
<div class="t" style="left:876.50px;top:661.75px;font-size:15px;line-height:22.5px;color:#212529;letter-spacing:0.04px;-webkit-text-stroke:0.45px #212529;">(ART0000000191)</div>
<svg class="b" style="left:1010px;top:669.0px" width="16" height="12" viewBox="0 0 16 12"><path d="M3 4.6 V3.4 Q3 1.4 5 1.4 H10.8 Q12.8 1.4 12.8 3.4 V4.2" stroke="#22adb0" stroke-width="1.75" fill="none"/><path d="M10.6 4 L15 4 L12.8 6.4 Z" fill="#22adb0"/><path d="M12.8 7.7 V8.6 Q12.8 10.6 10.8 10.6 H5 Q3 10.6 3 8.6 V8.4" stroke="#22adb0" stroke-width="1.75" fill="none"/><path d="M0.8 8.6 L5.2 8.6 L3 6.2 Z" fill="#22adb0"/></svg>
<div class="t" style="left:1029.50px;top:667.56px;font-size:10.5px;line-height:14px;color:#22adb0;letter-spacing:-0.45px;-webkit-text-stroke:0.2px #22adb0;">ERP</div>
<div class="b abtn" style="left:1060px;top:661.0px"><svg width="12" height="11" viewBox="0 0 12 11" style="margin-left:1px;margin-top:-1px"><path d="M1.2 5.5 H10.4" stroke="#212529" stroke-width="1.25" fill="none"/><path d="M6.3 1.2 L10.6 5.5 L6.3 9.8" stroke="#212529" stroke-width="1.4" fill="none"/></svg></div>
<div class="t" style="left:1214.30px;top:616.75px;font-size:15px;line-height:22.5px;color:#212529;">1</div>
<div class="t" style="left:1302.40px;top:616.75px;font-size:15px;line-height:22.5px;color:#6c757d;letter-spacing:-0.05px;">9 Février</div>
<div class="t" style="left:1302.40px;top:639.75px;font-size:15px;line-height:22.5px;color:#6c757d;letter-spacing:0.4px;">2024</div>
<div class="t" style="left:1396.90px;top:616.75px;font-size:15px;line-height:22.5px;color:#6c757d;letter-spacing:0.1px;">28</div>
<div class="t" style="left:1396.90px;top:639.75px;font-size:15px;line-height:22.5px;color:#6c757d;letter-spacing:0.1px;">Février</div>
<div class="t" style="left:1396.90px;top:661.75px;font-size:15px;line-height:22.5px;color:#6c757d;letter-spacing:0.1px;">2024</div>
<svg class="b" style="left:1478px;top:621.9px" width="15" height="15" viewBox="0 0 15 15"><circle cx="7.3" cy="7.5" r="3.05" fill="none" stroke="#6c757d" stroke-width="1.45"/><g stroke="#6c757d" stroke-width="1.3" stroke-linecap="round"><path d="M7.3 1.1 V1.9"/><path d="M7.3 13.1 V13.9"/><path d="M0.9 7.5 H1.7"/><path d="M12.9 7.5 H13.7"/><path d="M2.8 3 L3.3 3.5"/><path d="M11.3 11.5 L11.8 12"/><path d="M2.8 12 L3.3 11.5"/><path d="M11.3 3.5 L11.8 3"/></g></svg>
<div class="t" style="left:1496.20px;top:621.56px;font-size:10.5px;line-height:14px;color:#6c757d;letter-spacing:0.0px;">CBS</div>
<div class="t" style="left:1550.40px;top:617.45px;font-size:13px;line-height:22.5px;color:#6c757d;letter-spacing:0.05px;">9 Février</div>
<div class="t" style="left:1550.40px;top:640.45px;font-size:13px;line-height:22.5px;color:#6c757d;letter-spacing:0.05px;">2024</div>
<div class="t" style="left:1625.50px;top:617.45px;font-size:13px;line-height:22.5px;color:#6c757d;letter-spacing:0.05px;">28 Février</div>
<div class="t" style="left:1625.50px;top:640.45px;font-size:13px;line-height:22.5px;color:#6c757d;letter-spacing:0.05px;">2024</div>
<div class="t" style="left:1707.60px;top:617.45px;font-size:13px;line-height:22.5px;color:#6c757d;letter-spacing:0.15px;">support</div>
<div class="t" style="left:1707.60px;top:640.45px;font-size:13px;line-height:22.5px;color:#6c757d;letter-spacing:0.15px;">cobuy</div>
<div class="b kbtn" style="left:1783px;top:616px"><svg style="margin-top:2px" width="5" height="19" viewBox="0 0 5 19"><circle cx="2.5" cy="2" r="1.85" fill="#212529"/><circle cx="2.5" cy="9.6" r="1.85" fill="#212529"/><circle cx="2.5" cy="17.1" r="1.85" fill="#212529"/></svg></div>
<div class="b" style="left:308px;top:716px;width:11px;height:11px;border:1px solid #767676;border-radius:2px;box-sizing:border-box;"></div>
<div class="t" style="left:350.70px;top:711.75px;font-size:15px;line-height:22.5px;color:#6c757d;letter-spacing:-0.1px;">Recette</div>
<div class="t" style="left:350.70px;top:733.75px;font-size:15px;line-height:22.5px;color:#6c757d;letter-spacing:-0.1px;">COBuy</div>
<div class="t" style="left:446.50px;top:711.75px;font-size:15px;line-height:22.5px;color:#6c757d;letter-spacing:-0.2px;">Créé</div>
<div class="t" style="left:501.20px;top:711.75px;font-size:15px;line-height:22.5px;color:#212529;letter-spacing:0.35px;">DA000004</div>
<div class="t" style="left:597.00px;top:711.75px;font-size:15px;line-height:22.5px;color:#212529;letter-spacing:-0.1px;">support</div>
<div class="t" style="left:597.00px;top:733.75px;font-size:15px;line-height:22.5px;color:#212529;letter-spacing:-0.1px;">cobuy</div>
<div class="b" style="left:782px;top:715px;width:45px;height:17px;background:#ffca55;border-radius:3px;"></div>
<div class="t" style="left:789.00px;top:717.39px;font-size:11px;line-height:14px;color:#fff;font-weight:700;letter-spacing:0.0px;">Achat</div>
<div class="t" style="left:876.50px;top:711.75px;font-size:15px;line-height:22.5px;color:#212529;letter-spacing:-0.3px;-webkit-text-stroke:0.45px #212529;">S/T TOLERIE SUIVANT</div>
<div class="t" style="left:876.50px;top:733.75px;font-size:15px;line-height:22.5px;color:#212529;letter-spacing:-0.2px;-webkit-text-stroke:0.45px #212529;">PLANS/SPECS #5</div>
<div class="t" style="left:876.50px;top:756.75px;font-size:15px;line-height:22.5px;color:#212529;letter-spacing:0.04px;-webkit-text-stroke:0.45px #212529;">(ART0000000025)</div>
<svg class="b" style="left:1010px;top:764.0px" width="16" height="12" viewBox="0 0 16 12"><path d="M3 4.6 V3.4 Q3 1.4 5 1.4 H10.8 Q12.8 1.4 12.8 3.4 V4.2" stroke="#22adb0" stroke-width="1.75" fill="none"/><path d="M10.6 4 L15 4 L12.8 6.4 Z" fill="#22adb0"/><path d="M12.8 7.7 V8.6 Q12.8 10.6 10.8 10.6 H5 Q3 10.6 3 8.6 V8.4" stroke="#22adb0" stroke-width="1.75" fill="none"/><path d="M0.8 8.6 L5.2 8.6 L3 6.2 Z" fill="#22adb0"/></svg>
<div class="t" style="left:1029.50px;top:762.56px;font-size:10.5px;line-height:14px;color:#22adb0;letter-spacing:-0.45px;-webkit-text-stroke:0.2px #22adb0;">ERP</div>
<div class="b abtn" style="left:1060px;top:756.0px"><svg width="12" height="11" viewBox="0 0 12 11" style="margin-left:1px;margin-top:-1px"><path d="M1.2 5.5 H10.4" stroke="#212529" stroke-width="1.25" fill="none"/><path d="M6.3 1.2 L10.6 5.5 L6.3 9.8" stroke="#212529" stroke-width="1.4" fill="none"/></svg></div>
<div class="t" style="left:1214.30px;top:711.75px;font-size:15px;line-height:22.5px;color:#212529;">10</div>
<div class="t" style="left:1302.40px;top:711.75px;font-size:15px;line-height:22.5px;color:#6c757d;letter-spacing:-0.05px;">31 Janvier</div>
<div class="t" style="left:1302.40px;top:733.75px;font-size:15px;line-height:22.5px;color:#6c757d;letter-spacing:0.4px;">2024</div>
<div class="t" style="left:1396.90px;top:711.75px;font-size:15px;line-height:22.5px;color:#6c757d;letter-spacing:0.1px;">--</div>
<svg class="b" style="left:1478px;top:716.9px" width="15" height="15" viewBox="0 0 15 15"><circle cx="7.3" cy="7.5" r="3.05" fill="none" stroke="#6c757d" stroke-width="1.45"/><g stroke="#6c757d" stroke-width="1.3" stroke-linecap="round"><path d="M7.3 1.1 V1.9"/><path d="M7.3 13.1 V13.9"/><path d="M0.9 7.5 H1.7"/><path d="M12.9 7.5 H13.7"/><path d="M2.8 3 L3.3 3.5"/><path d="M11.3 11.5 L11.8 12"/><path d="M2.8 12 L3.3 11.5"/><path d="M11.3 3.5 L11.8 3"/></g></svg>
<div class="t" style="left:1496.20px;top:716.56px;font-size:10.5px;line-height:14px;color:#6c757d;letter-spacing:0.0px;">CBS</div>
<div class="t" style="left:1550.40px;top:712.45px;font-size:13px;line-height:22.5px;color:#6c757d;letter-spacing:0.05px;">31</div>
<div class="t" style="left:1550.40px;top:734.45px;font-size:13px;line-height:22.5px;color:#6c757d;letter-spacing:0.05px;">Janvier</div>
<div class="t" style="left:1550.40px;top:757.45px;font-size:13px;line-height:22.5px;color:#6c757d;letter-spacing:0.05px;">2024</div>
<div class="t" style="left:1625.50px;top:712.45px;font-size:13px;line-height:22.5px;color:#6c757d;letter-spacing:0.05px;">31 Janvier</div>
<div class="t" style="left:1625.50px;top:734.45px;font-size:13px;line-height:22.5px;color:#6c757d;letter-spacing:0.05px;">2024</div>
<div class="t" style="left:1707.60px;top:712.45px;font-size:13px;line-height:22.5px;color:#6c757d;letter-spacing:0.15px;">support</div>
<div class="t" style="left:1707.60px;top:734.45px;font-size:13px;line-height:22.5px;color:#6c757d;letter-spacing:0.15px;">cobuy</div>
<div class="b kbtn" style="left:1783px;top:711px"><svg style="margin-top:2px" width="5" height="19" viewBox="0 0 5 19"><circle cx="2.5" cy="2" r="1.85" fill="#212529"/><circle cx="2.5" cy="9.6" r="1.85" fill="#212529"/><circle cx="2.5" cy="17.1" r="1.85" fill="#212529"/></svg></div>
<div class="b" style="left:308px;top:810px;width:11px;height:11px;border:1px solid #767676;border-radius:2px;box-sizing:border-box;"></div>
<div class="t" style="left:350.70px;top:805.75px;font-size:15px;line-height:22.5px;color:#6c757d;letter-spacing:-0.1px;">Recette</div>
<div class="t" style="left:350.70px;top:828.75px;font-size:15px;line-height:22.5px;color:#6c757d;letter-spacing:-0.1px;">COBuy</div>
<div class="t" style="left:446.50px;top:805.75px;font-size:15px;line-height:22.5px;color:#6c757d;letter-spacing:-0.2px;">Créé</div>
<div class="t" style="left:501.20px;top:805.75px;font-size:15px;line-height:22.5px;color:#212529;letter-spacing:0.35px;">DA000003</div>
<div class="t" style="left:597.00px;top:805.75px;font-size:15px;line-height:22.5px;color:#212529;letter-spacing:-0.1px;">support</div>
<div class="t" style="left:597.00px;top:828.75px;font-size:15px;line-height:22.5px;color:#212529;letter-spacing:-0.1px;">cobuy</div>
<div class="b" style="left:782px;top:809px;width:45px;height:17px;background:#ffca55;border-radius:3px;"></div>
<div class="t" style="left:789.00px;top:811.39px;font-size:11px;line-height:14px;color:#fff;font-weight:700;letter-spacing:0.0px;">Achat</div>
<div class="t" style="left:876.50px;top:805.75px;font-size:15px;line-height:22.5px;color:#212529;letter-spacing:0px;-webkit-text-stroke:0.45px #212529;">--</div>
<div class="t" style="left:1214.30px;top:805.75px;font-size:15px;line-height:22.5px;color:#212529;">1</div>
<div class="t" style="left:1302.40px;top:805.75px;font-size:15px;line-height:22.5px;color:#6c757d;letter-spacing:-0.05px;">31 Janvier</div>
<div class="t" style="left:1302.40px;top:828.75px;font-size:15px;line-height:22.5px;color:#6c757d;letter-spacing:0.4px;">2024</div>
<div class="t" style="left:1396.90px;top:805.75px;font-size:15px;line-height:22.5px;color:#6c757d;letter-spacing:0.1px;">--</div>
<svg class="b" style="left:1478px;top:810.9px" width="15" height="15" viewBox="0 0 15 15"><circle cx="7.3" cy="7.5" r="3.05" fill="none" stroke="#6c757d" stroke-width="1.45"/><g stroke="#6c757d" stroke-width="1.3" stroke-linecap="round"><path d="M7.3 1.1 V1.9"/><path d="M7.3 13.1 V13.9"/><path d="M0.9 7.5 H1.7"/><path d="M12.9 7.5 H13.7"/><path d="M2.8 3 L3.3 3.5"/><path d="M11.3 11.5 L11.8 12"/><path d="M2.8 12 L3.3 11.5"/><path d="M11.3 3.5 L11.8 3"/></g></svg>
<div class="t" style="left:1496.20px;top:810.56px;font-size:10.5px;line-height:14px;color:#6c757d;letter-spacing:0.0px;">CBS</div>
<div class="t" style="left:1550.40px;top:806.45px;font-size:13px;line-height:22.5px;color:#6c757d;letter-spacing:0.05px;">31</div>
<div class="t" style="left:1550.40px;top:829.45px;font-size:13px;line-height:22.5px;color:#6c757d;letter-spacing:0.05px;">Janvier</div>
<div class="t" style="left:1550.40px;top:851.45px;font-size:13px;line-height:22.5px;color:#6c757d;letter-spacing:0.05px;">2024</div>
<div class="t" style="left:1625.50px;top:806.45px;font-size:13px;line-height:22.5px;color:#6c757d;letter-spacing:0.05px;">17 Février</div>
<div class="t" style="left:1625.50px;top:829.45px;font-size:13px;line-height:22.5px;color:#6c757d;letter-spacing:0.05px;">2024</div>
<div class="t" style="left:1707.60px;top:806.45px;font-size:13px;line-height:22.5px;color:#6c757d;letter-spacing:0.15px;">support</div>
<div class="t" style="left:1707.60px;top:829.45px;font-size:13px;line-height:22.5px;color:#6c757d;letter-spacing:0.15px;">cobuy</div>
<div class="b kbtn" style="left:1783px;top:805px"><svg style="margin-top:2px" width="5" height="19" viewBox="0 0 5 19"><circle cx="2.5" cy="2" r="1.85" fill="#212529"/><circle cx="2.5" cy="9.6" r="1.85" fill="#212529"/><circle cx="2.5" cy="17.1" r="1.85" fill="#212529"/></svg></div>
<div class="b" style="left:1884px;top:145px;width:21px;height:745px;background:#f1f1f1;"></div>
<div class="b" style="left:1886px;top:172px;width:17px;height:696px;background:#c1c1c1;"></div>
<svg class="b" style="left:1890px;top:153px" width="10" height="6"><path d="M0 6 L5 0.5 L10 6 Z" fill="#505050"/></svg>
<svg class="b" style="left:1890px;top:875px" width="10" height="6"><path d="M0 0 L10 0 L5 5.5 Z" fill="#505050"/></svg>
</div>
</body></html>
